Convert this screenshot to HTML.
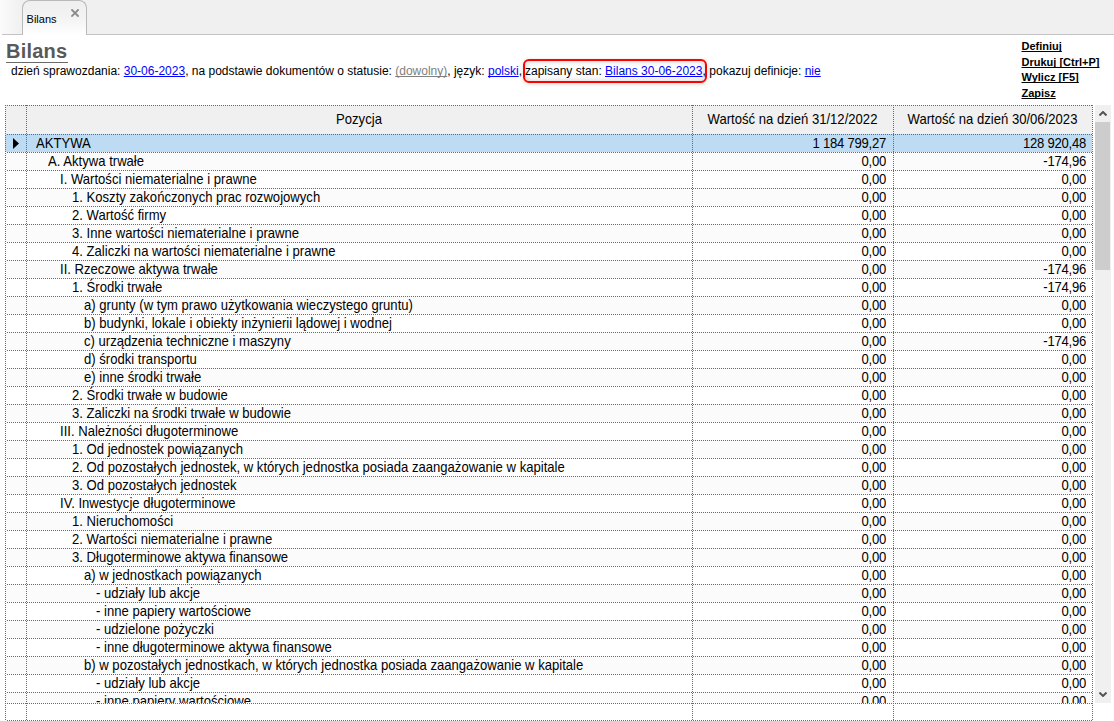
<!DOCTYPE html>
<html><head><meta charset="utf-8"><style>
*{margin:0;padding:0;box-sizing:border-box}
html,body{width:1114px;height:721px;overflow:hidden;background:#fff}
body{position:relative;font-family:"Liberation Sans",sans-serif;color:#000}
.a{position:absolute;white-space:pre;line-height:normal}
.hd{position:absolute;height:1px;background-image:linear-gradient(to right,#6a6a6a 50%,transparent 50%);background-size:2px 1px;background-position:0 0}
.vd{position:absolute;width:1px;background-image:linear-gradient(to bottom,#6a6a6a 50%,transparent 50%);background-size:1px 2px;background-position:0 0}
#tabbar{position:absolute;left:0;top:0;width:1114px;height:34px;background:linear-gradient(to right,#fbfbfb 0px,#f0f0f0 22px)}
#tabline{position:absolute;left:2px;top:34px;width:1112px;height:1px;background:#c3c3c3}
#tab{position:absolute;left:22px;top:0;width:65px;height:35px;border:1px solid #b9b9b9;border-bottom:none;border-radius:8px 8px 0 0;background:linear-gradient(to bottom,#efefef 0%,#f3f3f3 50%,#ffffff 100%)}
a,.lnk{color:#0000ff;text-decoration:underline;text-decoration-skip-ink:none}
.info{font-size:12px}
.gray{color:#808080;text-decoration:underline;text-decoration-skip-ink:none}
.rl{font-size:11px;font-weight:bold;color:#000;text-decoration:underline;text-decoration-skip-ink:none;text-underline-offset:1px;text-decoration-thickness:1px}
#grid{position:absolute;left:5px;top:105px;width:1088px;height:616px}
#hdr{position:absolute;left:0;top:0;width:1087px;height:29px;background:#f0f0f0}
#body{position:absolute;left:0;top:29px;width:1087px;height:569px;overflow:hidden}
.row{position:absolute;left:0;width:1087px;height:18px;font-size:13.1px}
.row span{position:absolute;white-space:pre;line-height:normal;transform:scaleY(1.1);transform-origin:0 12px}
.v1{right:206px;letter-spacing:-0.25px}
.v2{right:6px;letter-spacing:-0.25px}
.hdt{position:absolute;font-size:13.1px;white-space:pre;line-height:normal;top:7px;text-align:center;transform:scaleY(1.1);transform-origin:0 12px}
#sb{position:absolute;left:1095px;top:105px;width:16px;height:598px;background:#f0f0f0}
#thumb{position:absolute;left:0;top:17px;width:15px;height:148px;background:#cdcdcd}
</style></head><body>
<div id="tabbar"></div>
<div id="tabline"></div>
<div id="tab"></div>
<div class="a" style="left:26.6px;top:13px;font-size:11px;color:#000">Bilans</div>
<svg style="position:absolute;left:71px;top:9px" width="8" height="8" viewBox="0 0 8 8"><path d="M1 1L7 7M7 1L1 7" stroke="#8a8a8a" stroke-width="1.8" stroke-linecap="square"/></svg>

<div class="a" style="left:6px;top:40px;font-size:20px;font-weight:bold;color:#595959;letter-spacing:0.2px">Bilans</div>
<div style="position:absolute;left:6px;top:62px;width:62px;height:1px;background:#6a6a6a"></div>

<div class="a info" style="left:11px;top:64px">dzień sprawozdania: <span class="lnk">30-06-2023</span>, na podstawie dokumentów o statusie: <span class="gray">(dowolny)</span>, język: <span class="lnk">polski</span>,<span id="box" style="padding:0 3.5px 0 3px">zapisany stan: <span class="lnk">Bilans 30-06-2023</span>,</span>pokazuj definicje: <span class="lnk">nie</span></div>

<div id="redbox" style="position:absolute;left:523px;top:59px;width:184px;height:24px;border:2px solid #ff0000;border-radius:6px;box-shadow:0 1px 5px rgba(0,0,0,0.14), inset 0 0 6px rgba(0,0,0,0.2)"></div>
<div class="a rl" style="left:1021.5px;top:39px;line-height:15.5px">Definiuj<br>Drukuj [Ctrl+P]<br>Wylicz [F5]<br>Zapisz</div>

<div id="grid">
<div id="hdr"></div>
<div class="hdt" style="left:21px;width:666px">Pozycja</div>
<div class="hdt" style="left:687px;width:201px">Wartość na dzień 31/12/2022</div>
<div class="hdt" style="left:888px;width:199px">Wartość na dzień 30/06/2023</div>
<div id="body">
<div class="row" style="top:0px;background:#bddcf4"><span class="nm" style="left:31px;top:2px">AKTYWA</span><span class="v1" style="top:2px">1 184 799,27</span><span class="v2" style="top:2px">128 920,48</span></div><div class="row" style="top:18px;background:#fbfbfb"><span class="nm" style="left:43px;top:2px">A. Aktywa trwałe</span><span class="v1" style="top:2px">0,00</span><span class="v2" style="top:2px">-174,96</span></div><div class="row" style="top:36px;background:#ffffff"><span class="nm" style="left:55px;top:2px">I. Wartości niematerialne i prawne</span><span class="v1" style="top:2px">0,00</span><span class="v2" style="top:2px">0,00</span></div><div class="row" style="top:54px;background:#fbfbfb"><span class="nm" style="left:67px;top:2px">1. Koszty zakończonych prac rozwojowych</span><span class="v1" style="top:2px">0,00</span><span class="v2" style="top:2px">0,00</span></div><div class="row" style="top:72px;background:#ffffff"><span class="nm" style="left:67px;top:2px">2. Wartość firmy</span><span class="v1" style="top:2px">0,00</span><span class="v2" style="top:2px">0,00</span></div><div class="row" style="top:90px;background:#fbfbfb"><span class="nm" style="left:67px;top:2px">3. Inne wartości niematerialne i prawne</span><span class="v1" style="top:2px">0,00</span><span class="v2" style="top:2px">0,00</span></div><div class="row" style="top:108px;background:#ffffff"><span class="nm" style="left:67px;top:2px">4. Zaliczki na wartości niematerialne i prawne</span><span class="v1" style="top:2px">0,00</span><span class="v2" style="top:2px">0,00</span></div><div class="row" style="top:126px;background:#fbfbfb"><span class="nm" style="left:55px;top:2px">II. Rzeczowe aktywa trwałe</span><span class="v1" style="top:2px">0,00</span><span class="v2" style="top:2px">-174,96</span></div><div class="row" style="top:144px;background:#ffffff"><span class="nm" style="left:67px;top:2px">1. Środki trwałe</span><span class="v1" style="top:2px">0,00</span><span class="v2" style="top:2px">-174,96</span></div><div class="row" style="top:162px;background:#fbfbfb"><span class="nm" style="left:79px;top:2px">a) grunty (w tym prawo użytkowania wieczystego gruntu)</span><span class="v1" style="top:2px">0,00</span><span class="v2" style="top:2px">0,00</span></div><div class="row" style="top:180px;background:#ffffff"><span class="nm" style="left:79px;top:2px">b) budynki, lokale i obiekty inżynierii lądowej i wodnej</span><span class="v1" style="top:2px">0,00</span><span class="v2" style="top:2px">0,00</span></div><div class="row" style="top:198px;background:#fbfbfb"><span class="nm" style="left:79px;top:2px">c) urządzenia techniczne i maszyny</span><span class="v1" style="top:2px">0,00</span><span class="v2" style="top:2px">-174,96</span></div><div class="row" style="top:216px;background:#ffffff"><span class="nm" style="left:79px;top:2px">d) środki transportu</span><span class="v1" style="top:2px">0,00</span><span class="v2" style="top:2px">0,00</span></div><div class="row" style="top:234px;background:#fbfbfb"><span class="nm" style="left:79px;top:2px">e) inne środki trwałe</span><span class="v1" style="top:2px">0,00</span><span class="v2" style="top:2px">0,00</span></div><div class="row" style="top:252px;background:#ffffff"><span class="nm" style="left:67px;top:2px">2. Środki trwałe w budowie</span><span class="v1" style="top:2px">0,00</span><span class="v2" style="top:2px">0,00</span></div><div class="row" style="top:270px;background:#fbfbfb"><span class="nm" style="left:67px;top:2px">3. Zaliczki na środki trwałe w budowie</span><span class="v1" style="top:2px">0,00</span><span class="v2" style="top:2px">0,00</span></div><div class="row" style="top:288px;background:#ffffff"><span class="nm" style="left:55px;top:2px">III. Należności długoterminowe</span><span class="v1" style="top:2px">0,00</span><span class="v2" style="top:2px">0,00</span></div><div class="row" style="top:306px;background:#fbfbfb"><span class="nm" style="left:67px;top:2px">1. Od jednostek powiązanych</span><span class="v1" style="top:2px">0,00</span><span class="v2" style="top:2px">0,00</span></div><div class="row" style="top:324px;background:#ffffff"><span class="nm" style="left:67px;top:2px">2. Od pozostałych jednostek, w których jednostka posiada zaangażowanie w kapitale</span><span class="v1" style="top:2px">0,00</span><span class="v2" style="top:2px">0,00</span></div><div class="row" style="top:342px;background:#fbfbfb"><span class="nm" style="left:67px;top:2px">3. Od pozostałych jednostek</span><span class="v1" style="top:2px">0,00</span><span class="v2" style="top:2px">0,00</span></div><div class="row" style="top:360px;background:#ffffff"><span class="nm" style="left:55px;top:2px">IV. Inwestycje długoterminowe</span><span class="v1" style="top:2px">0,00</span><span class="v2" style="top:2px">0,00</span></div><div class="row" style="top:378px;background:#fbfbfb"><span class="nm" style="left:67px;top:2px">1. Nieruchomości</span><span class="v1" style="top:2px">0,00</span><span class="v2" style="top:2px">0,00</span></div><div class="row" style="top:396px;background:#ffffff"><span class="nm" style="left:67px;top:2px">2. Wartości niematerialne i prawne</span><span class="v1" style="top:2px">0,00</span><span class="v2" style="top:2px">0,00</span></div><div class="row" style="top:414px;background:#fbfbfb"><span class="nm" style="left:67px;top:2px">3. Długoterminowe aktywa finansowe</span><span class="v1" style="top:2px">0,00</span><span class="v2" style="top:2px">0,00</span></div><div class="row" style="top:432px;background:#ffffff"><span class="nm" style="left:79px;top:2px">a) w jednostkach powiązanych</span><span class="v1" style="top:2px">0,00</span><span class="v2" style="top:2px">0,00</span></div><div class="row" style="top:450px;background:#fbfbfb"><span class="nm" style="left:91px;top:2px">- udziały lub akcje</span><span class="v1" style="top:2px">0,00</span><span class="v2" style="top:2px">0,00</span></div><div class="row" style="top:468px;background:#ffffff"><span class="nm" style="left:91px;top:2px">- inne papiery wartościowe</span><span class="v1" style="top:2px">0,00</span><span class="v2" style="top:2px">0,00</span></div><div class="row" style="top:486px;background:#fbfbfb"><span class="nm" style="left:91px;top:2px">- udzielone pożyczki</span><span class="v1" style="top:2px">0,00</span><span class="v2" style="top:2px">0,00</span></div><div class="row" style="top:504px;background:#ffffff"><span class="nm" style="left:91px;top:2px">- inne długoterminowe aktywa finansowe</span><span class="v1" style="top:2px">0,00</span><span class="v2" style="top:2px">0,00</span></div><div class="row" style="top:522px;background:#fbfbfb"><span class="nm" style="left:79px;top:2px">b) w pozostałych jednostkach, w których jednostka posiada zaangażowanie w kapitale</span><span class="v1" style="top:2px">0,00</span><span class="v2" style="top:2px">0,00</span></div><div class="row" style="top:540px;background:#ffffff"><span class="nm" style="left:91px;top:2px">- udziały lub akcje</span><span class="v1" style="top:2px">0,00</span><span class="v2" style="top:2px">0,00</span></div><div class="row" style="top:558px;background:#fbfbfb"><span class="nm" style="left:91px;top:2px">- inne papiery wartościowe</span><span class="v1" style="top:2px">0,00</span><span class="v2" style="top:2px">0,00</span></div><div class="hd" style="left:1px;top:18px;width:1086px;background-position:-1px 0"></div><div class="hd" style="left:1px;top:36px;width:1086px;background-position:-1px 0"></div><div class="hd" style="left:1px;top:54px;width:1086px;background-position:-1px 0"></div><div class="hd" style="left:1px;top:72px;width:1086px;background-position:-1px 0"></div><div class="hd" style="left:1px;top:90px;width:1086px;background-position:-1px 0"></div><div class="hd" style="left:1px;top:108px;width:1086px;background-position:-1px 0"></div><div class="hd" style="left:1px;top:126px;width:1086px;background-position:-1px 0"></div><div class="hd" style="left:1px;top:144px;width:1086px;background-position:-1px 0"></div><div class="hd" style="left:1px;top:162px;width:1086px;background-position:-1px 0"></div><div class="hd" style="left:1px;top:180px;width:1086px;background-position:-1px 0"></div><div class="hd" style="left:1px;top:198px;width:1086px;background-position:-1px 0"></div><div class="hd" style="left:1px;top:216px;width:1086px;background-position:-1px 0"></div><div class="hd" style="left:1px;top:234px;width:1086px;background-position:-1px 0"></div><div class="hd" style="left:1px;top:252px;width:1086px;background-position:-1px 0"></div><div class="hd" style="left:1px;top:270px;width:1086px;background-position:-1px 0"></div><div class="hd" style="left:1px;top:288px;width:1086px;background-position:-1px 0"></div><div class="hd" style="left:1px;top:306px;width:1086px;background-position:-1px 0"></div><div class="hd" style="left:1px;top:324px;width:1086px;background-position:-1px 0"></div><div class="hd" style="left:1px;top:342px;width:1086px;background-position:-1px 0"></div><div class="hd" style="left:1px;top:360px;width:1086px;background-position:-1px 0"></div><div class="hd" style="left:1px;top:378px;width:1086px;background-position:-1px 0"></div><div class="hd" style="left:1px;top:396px;width:1086px;background-position:-1px 0"></div><div class="hd" style="left:1px;top:414px;width:1086px;background-position:-1px 0"></div><div class="hd" style="left:1px;top:432px;width:1086px;background-position:-1px 0"></div><div class="hd" style="left:1px;top:450px;width:1086px;background-position:-1px 0"></div><div class="hd" style="left:1px;top:468px;width:1086px;background-position:-1px 0"></div><div class="hd" style="left:1px;top:486px;width:1086px;background-position:-1px 0"></div><div class="hd" style="left:1px;top:504px;width:1086px;background-position:-1px 0"></div><div class="hd" style="left:1px;top:522px;width:1086px;background-position:-1px 0"></div><div class="hd" style="left:1px;top:540px;width:1086px;background-position:-1px 0"></div><div class="hd" style="left:1px;top:558px;width:1086px;background-position:-1px 0"></div><div class="hd" style="left:1px;top:576px;width:1086px;background-position:-1px 0"></div>
</div>
<div class="hd" style="left:0px;top:0px;width:1088px;"></div>
<div class="hd" style="left:1px;top:598px;width:1087px;background-position:-1px 0"></div>
<div class="hd" style="left:1px;top:615px;width:1087px;background-position:-1px 0"></div>
<div class="hd" style="left:1px;top:29px;width:1087px;background-position:-1px 0"></div>
<div class="vd" style="left:0px;top:0px;height:616px;"></div>
<div class="vd" style="left:21px;top:0px;height:616px;"></div>
<div class="vd" style="left:687px;top:0px;height:616px;"></div>
<div class="vd" style="left:888px;top:0px;height:616px;"></div>
<div class="vd" style="left:1087px;top:0px;height:616px;"></div>
<svg style="position:absolute;left:8px;top:33px" width="6" height="11" viewBox="0 0 6 11"><path d="M0 0L6 5.5L0 11Z" fill="#000"/></svg>
</div>

<div id="sb"><div id="thumb"></div>
<svg style="position:absolute;left:4px;top:6px" width="8" height="5" viewBox="0 0 8 5"><path d="M0.5 4.5L4 1L7.5 4.5" stroke="#555" stroke-width="2" fill="none"/></svg>
<svg style="position:absolute;left:4px;top:587px" width="8" height="5" viewBox="0 0 8 5"><path d="M0.5 0.5L4 4L7.5 0.5" stroke="#555" stroke-width="2" fill="none"/></svg>
</div>
</body></html>
